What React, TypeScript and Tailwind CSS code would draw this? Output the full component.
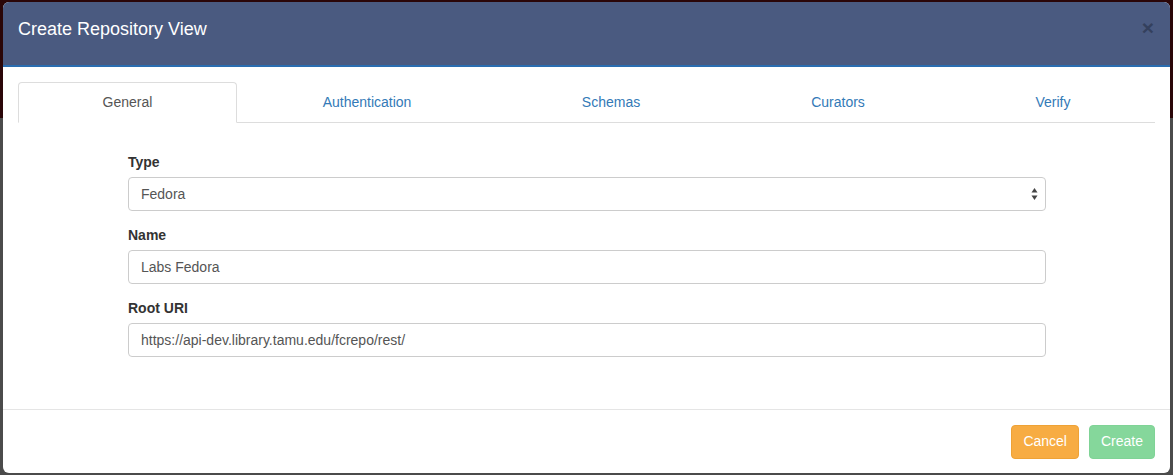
import React from "react"

const tabs = [
  { label: "General", width: 219, active: true },
  { label: "Authentication", width: 260 },
  { label: "Schemas", width: 228 },
  { label: "Curators", width: 226 },
  { label: "Verify", width: 204 },
]

function Field({ label, children }: { label: string; children: React.ReactNode }) {
  return (
    <div className="mb-[14px]">
      <label className="mb-[5px] block text-[14px] font-bold leading-[20px] text-[#333]">{label}</label>
      {children}
    </div>
  )
}

function TextInput({ value }: { value: string }) {
  return (
    <div className="flex h-[34px] items-center rounded-[4px] border border-[#ccc] bg-white px-[12px] text-[14px] text-[#555]">
      {value}
    </div>
  )
}

export default function App() {
  return (
    <div
      className="h-[475px] w-[1173px] overflow-hidden bg-[linear-gradient(#2a0608_118px,#4b4b4b_118px)] pl-[3px] pt-[2px]"
      style={{ fontFamily: '"Liberation Sans", Arial, sans-serif' }}
    >
      <div className="flex h-[471px] w-[1167px] flex-col overflow-hidden rounded-[6px] bg-white">
        <div className="flex h-[65px] shrink-0 items-start justify-between border-b-2 border-[#2a6db0] bg-[#4a5a80] pl-[15px] pr-[16px] pt-[14px]">
          <h4 className="text-[18px] leading-[26px] text-white">Create Repository View</h4>
          <span className="mt-[1px] text-[21px] font-bold leading-none text-[#2f3a55] opacity-80">×</span>
        </div>

        <div className="flex-1 px-[15px] pt-[15px]">
          <div className="flex border-b border-[#ddd]">
            {tabs.map((t) => (
              <div
                key={t.label}
                style={{ width: t.width }}
                className={
                  t.active
                    ? "-mb-px flex h-[41px] items-center justify-center rounded-t-[4px] border border-b-white border-[#ddd] bg-white text-[14px] text-[#555]"
                    : "flex h-[40px] items-center justify-center text-[14px] text-[#337ab7]"
                }
              >
                {t.label}
              </div>
            ))}
          </div>

          <div className="ml-[110px] w-[918px] pt-[29px]">
            <Field label="Type">
              <div className="flex h-[34px] items-center justify-between rounded-[4px] border border-[#ccc] bg-white pl-[12px] pr-[7px] text-[14px] text-[#555]">
                <span>Fedora</span>
                <svg width="7" height="14" viewBox="0 0 7 14">
                  <path d="M3.5 1 L6.5 5.5 L0.5 5.5 Z" fill="#444" />
                  <path d="M3.5 13 L6.5 8.5 L0.5 8.5 Z" fill="#444" />
                </svg>
              </div>
            </Field>
            <Field label="Name">
              <TextInput value="Labs Fedora" />
            </Field>
            <Field label="Root URI">
              <TextInput value="https://api-dev.library.tamu.edu/fcrepo/rest/" />
            </Field>
          </div>
        </div>

        <div className="flex h-[64px] shrink-0 items-center justify-end gap-[10px] border-t border-[#e5e5e5] px-[15px]">
          <button className="h-[34px] rounded-[4px] border border-[#eea236] bg-[#f7ac43] px-[11px] text-[14px] text-white">
            Cancel
          </button>
          <button className="h-[34px] rounded-[4px] border border-[#7fd396] bg-[#85d79b] px-[11px] text-[14px] text-white">
            Create
          </button>
        </div>
      </div>
    </div>
  )
}
